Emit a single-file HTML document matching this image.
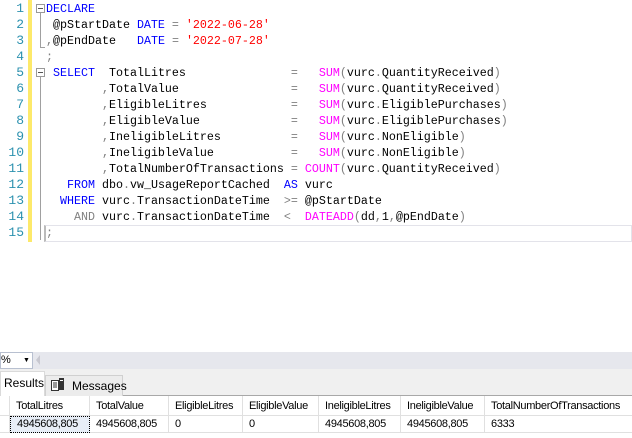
<!DOCTYPE html>
<html><head><meta charset="utf-8"><style>
*{margin:0;padding:0;box-sizing:border-box}
body{width:632px;height:438px;overflow:hidden;background:#fff;position:relative;font-family:"Liberation Sans",sans-serif}
.ln{position:absolute;left:0;width:24px;text-align:right;font:13px "Liberation Mono",monospace;color:#2b91af;line-height:16px}
.code{position:absolute;left:46px;top:1px;font:11.67px "Liberation Mono",monospace;line-height:16px;white-space:pre;color:#000}
.k{color:#0000ff}.s{color:#ff0000}.f{color:#ff00ff}.g{color:#808080}
.box{position:absolute;width:9px;height:9px;border:1px solid #999;background:#fff;left:36px}
.box:after{content:"";position:absolute;left:1px;top:3px;width:5px;height:1px;background:#555}
.grid{position:absolute;top:396px;left:0;width:632px;font-size:11px;color:#000;letter-spacing:-0.3px}
.c{position:absolute;height:20px;line-height:20px;padding-left:6px;border-right:1px solid #e0e0e0;border-bottom:1px solid #e0e0e0;white-space:nowrap;overflow:hidden}
</style></head><body>
<div class="ln" style="top:1px">1<br>2<br>3<br>4<br>5<br>6<br>7<br>8<br>9<br>10<br>11<br>12<br>13<br>14<br>15</div>
<div style="position:absolute;left:28px;top:0;width:4px;height:242px;background:#fde96a"></div>
<div style="position:absolute;left:40px;top:12px;width:1px;height:36px;background:#a0a0a0"></div>
<div style="position:absolute;left:40px;top:47px;width:5px;height:1px;background:#a0a0a0"></div>
<div style="position:absolute;left:40px;top:76px;width:1px;height:164px;background:#a0a0a0"></div>
<div class="box" style="top:4px"></div>
<div class="box" style="top:68px"></div>
<div style="position:absolute;left:44px;top:225px;width:588px;height:17px;border:1px solid #e3e3ea;border-left:2px solid #bbb"></div>
<div class="code"><span class="k">DECLARE</span>
 @pStartDate <span class="k">DATE</span> <span class="g">=</span> <span class="s">'2022-06-28'</span>
<span class="g">,</span>@pEndDate   <span class="k">DATE</span> <span class="g">=</span> <span class="s">'2022-07-28'</span>
<span class="g">;</span>
 <span class="k">SELECT</span>  TotalLitres               <span class="g">=</span>   <span class="f">SUM</span><span class="g">(</span>vurc<span class="g">.</span>QuantityReceived<span class="g">)</span>
        <span class="g">,</span>TotalValue                <span class="g">=</span>   <span class="f">SUM</span><span class="g">(</span>vurc<span class="g">.</span>QuantityReceived<span class="g">)</span>
        <span class="g">,</span>EligibleLitres            <span class="g">=</span>   <span class="f">SUM</span><span class="g">(</span>vurc<span class="g">.</span>EligiblePurchases<span class="g">)</span>
        <span class="g">,</span>EligibleValue             <span class="g">=</span>   <span class="f">SUM</span><span class="g">(</span>vurc<span class="g">.</span>EligiblePurchases<span class="g">)</span>
        <span class="g">,</span>IneligibleLitres          <span class="g">=</span>   <span class="f">SUM</span><span class="g">(</span>vurc<span class="g">.</span>NonEligible<span class="g">)</span>
        <span class="g">,</span>IneligibleValue           <span class="g">=</span>   <span class="f">SUM</span><span class="g">(</span>vurc<span class="g">.</span>NonEligible<span class="g">)</span>
        <span class="g">,</span>TotalNumberOfTransactions <span class="g">=</span> <span class="f">COUNT</span><span class="g">(</span>vurc<span class="g">.</span>QuantityReceived<span class="g">)</span>
   <span class="k">FROM</span> dbo<span class="g">.</span>vw_UsageReportCached  <span class="k">AS</span> vurc
  <span class="k">WHERE</span> vurc<span class="g">.</span>TransactionDateTime  <span class="g">&gt;=</span> @pStartDate
    <span class="g">AND</span> vurc<span class="g">.</span>TransactionDateTime  <span class="g">&lt;</span>  <span class="f">DATEADD</span><span class="g">(</span>dd<span class="g">,</span>1<span class="g">,</span>@pEndDate<span class="g">)</span>
<span class="g">;</span></div>
<div style="position:absolute;left:0;top:352px;width:632px;height:17px;background:#e6e7ed"></div>
<div style="position:absolute;left:0;top:352px;width:33px;height:17px;background:#fff;border:1px solid #b8c0d0;font-size:11px;line-height:15px;padding-left:0">%<span style="position:absolute;left:22px;top:0;font-size:7px">▼</span></div>
<div style="position:absolute;left:36px;top:355px;width:0;height:0;border-top:5px solid transparent;border-bottom:5px solid transparent;border-right:4px solid #c8c8d0"></div>
<div style="position:absolute;left:0;top:369px;width:632px;height:27px;background:#f0f0f0;border-bottom:1px solid #a8a8a8"></div>
<div style="position:absolute;left:0;top:371px;width:45px;height:25px;background:#fff;border:1px solid #dadada;border-bottom:none;font-size:12px;line-height:22px;padding-left:3px">Results</div>
<div style="position:absolute;left:45px;top:375px;width:78px;height:21px;background:#ececec;border:1px solid #d0d0d0;border-bottom:none;font-size:12px;line-height:20px;padding-left:26px">Messages</div>
<svg style="position:absolute;left:51px;top:377px" width="14" height="14"><rect x="0.5" y="3.5" width="7" height="10" fill="#fff" stroke="#333"/><path d="M2 6h4M2 8h4M2 10h4" stroke="#333"/><rect x="8" y="1" width="5" height="12" fill="#333"/><rect x="9" y="3" width="3" height="1" fill="#fff"/></svg>
<div class="grid">
<div class="c" style="left:0;width:10px;top:0;padding:0"></div>
<div class="c" style="left:10px;width:80px;top:0">TotalLitres</div>
<div class="c" style="left:90px;width:79px;top:0">TotalValue</div>
<div class="c" style="left:169px;width:74px;top:0">EligibleLitres</div>
<div class="c" style="left:243px;width:76px;top:0">EligibleValue</div>
<div class="c" style="left:319px;width:82px;top:0">IneligibleLitres</div>
<div class="c" style="left:401px;width:84px;top:0">IneligibleValue</div>
<div class="c" style="left:485px;width:147px;top:0;border-right:none">TotalNumberOfTransactions</div>
<div class="c" style="left:0;width:10px;top:20px;padding:0;height:17px"></div>
<div class="c" style="left:10px;width:80px;top:20px;height:17px;line-height:15px;background:#e8eef7;border:1px dotted #000">4945608,805</div>
<div class="c" style="left:90px;width:79px;top:20px;height:17px;line-height:17px">4945608,805</div>
<div class="c" style="left:169px;width:74px;top:20px;height:17px;line-height:17px">0</div>
<div class="c" style="left:243px;width:76px;top:20px;height:17px;line-height:17px">0</div>
<div class="c" style="left:319px;width:82px;top:20px;height:17px;line-height:17px">4945608,805</div>
<div class="c" style="left:401px;width:84px;top:20px;height:17px;line-height:17px">4945608,805</div>
<div class="c" style="left:485px;width:147px;top:20px;height:17px;line-height:17px;border-right:none">6333</div>
</div>
</body></html>
